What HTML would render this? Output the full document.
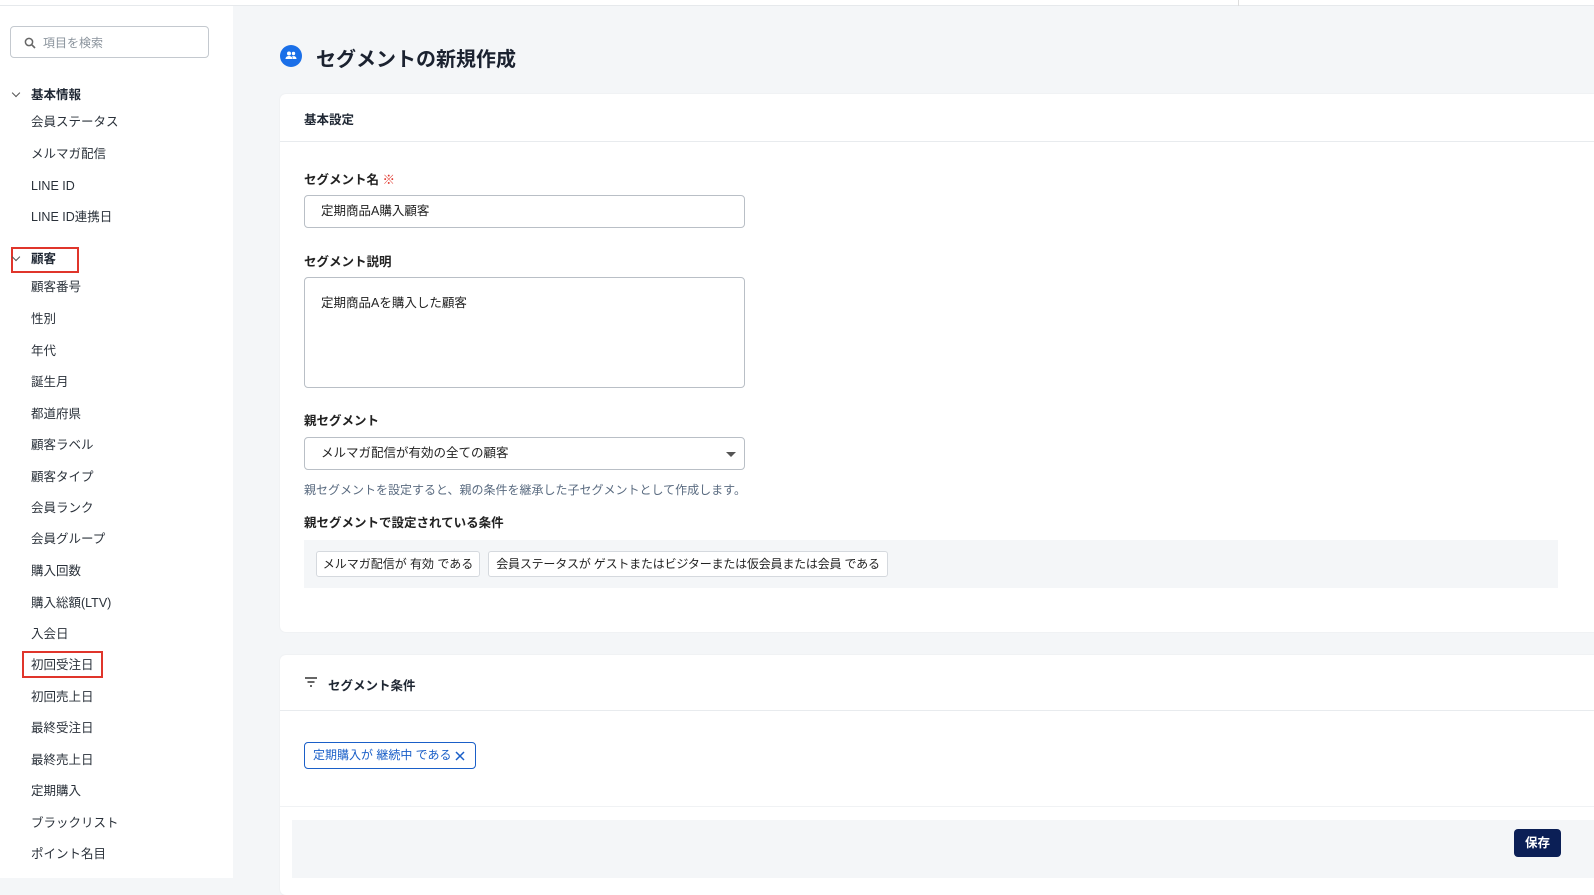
<!DOCTYPE html>
<html><head><meta charset="utf-8"><style>
*{box-sizing:border-box;margin:0;padding:0}
body{width:1594px;height:878px;overflow:hidden;background:#f4f6f8;font-family:"Liberation Sans","Noto Sans CJK JP",sans-serif;color:#1f2733;position:relative;white-space:nowrap}
.abs{position:absolute}
.top{left:0;top:0;width:1594px;height:6px;background:#fff;border-bottom:1px solid #e6e9ec}
.side{left:0;top:6px;width:233px;height:872px;background:#fff}
.search{left:10px;top:26px;width:199px;height:32px;border:1px solid #c4c9cf;border-radius:4px;font-size:12px;color:#8a939c;padding:7px 0 0 32px}
.it{left:31px;font-size:12.5px;color:#2a313a;line-height:16px}
.hd{left:31px;font-size:12.5px;font-weight:bold;line-height:16px}
.chev{left:13px;width:6px;height:6px;border-right:1px solid #555;border-bottom:1px solid #555;transform:rotate(45deg)}
.red{border:2px solid #e0352b}
.card{background:#fff;border-radius:6px;box-shadow:0 0 2px rgba(0,0,0,.06)}
.lbl{left:304px;font-size:12.5px;font-weight:bold;color:#222;line-height:16px}
.inp{left:304px;width:441px;border:1px solid #b9bfc6;border-radius:4px;background:#fff;font-size:12.5px;padding-left:16px;color:#222}
.chip{top:551px;height:26px;border:1px solid #d5d9de;border-radius:3px;background:#fff;font-size:12px;line-height:24px;text-align:center;color:#222;overflow:hidden}
</style></head><body>
<div class="abs top"></div>
<div class="abs" style="left:1238px;top:0;width:1px;height:6px;background:#ddd"></div>
<div class="abs side"></div>
<div class="abs search"><svg class="abs" style="left:13px;top:10px" width="12" height="12" viewBox="0 0 12 12"><circle cx="5" cy="5" r="3.6" fill="none" stroke="#666" stroke-width="1.5"/><path d="M7.6 7.6L11 11" stroke="#666" stroke-width="1.6"/></svg>項目を検索</div>

<div class="abs chev" style="top:90px"></div><div class="abs hd" style="top:87px">基本情報</div>
<div class="abs it" style="top:114px">会員ステータス</div>
<div class="abs it" style="top:146px">メルマガ配信</div>
<div class="abs it" style="top:178px">LINE ID</div>
<div class="abs it" style="top:209px">LINE ID連携日</div>
<div class="abs red" style="left:11px;top:247px;width:68px;height:26px"></div>
<div class="abs chev" style="top:254px"></div><div class="abs hd" style="top:251px">顧客</div>
<div class="abs it" style="top:279px">顧客番号</div>
<div class="abs it" style="top:311px">性別</div>
<div class="abs it" style="top:343px">年代</div>
<div class="abs it" style="top:374px">誕生月</div>
<div class="abs it" style="top:406px">都道府県</div>
<div class="abs it" style="top:437px">顧客ラベル</div>
<div class="abs it" style="top:469px">顧客タイプ</div>
<div class="abs it" style="top:500px">会員ランク</div>
<div class="abs it" style="top:531px">会員グループ</div>
<div class="abs it" style="top:563px">購入回数</div>
<div class="abs it" style="top:595px">購入総額(LTV)</div>
<div class="abs it" style="top:626px">入会日</div>
<div class="abs red" style="left:22px;top:651px;width:81px;height:27px"></div>
<div class="abs it" style="top:657px">初回受注日</div>
<div class="abs it" style="top:689px">初回売上日</div>
<div class="abs it" style="top:720px">最終受注日</div>
<div class="abs it" style="top:752px">最終売上日</div>
<div class="abs it" style="top:783px">定期購入</div>
<div class="abs it" style="top:815px">ブラックリスト</div>
<div class="abs it" style="top:846px">ポイント名目</div>

<div class="abs" style="left:280px;top:45px;width:22px;height:22px;border-radius:50%;background:#1a6fe8">
<svg width="22" height="22" viewBox="0 0 22 22"><circle cx="9" cy="8.5" r="2" fill="#fff"/><circle cx="13.5" cy="8.5" r="1.7" fill="#fff"/><path d="M5.5 14c0-2 1.6-3 3.5-3s3.5 1 3.5 3z M12.8 14c0-1.3-.3-2-.9-2.6 .5-.2 1-.3 1.6-.3 1.7 0 3 .9 3 2.9z" fill="#fff"/></svg></div>
<div class="abs" style="left:316px;top:43px;font-size:20px;font-weight:bold;color:#1b2230">セグメントの新規作成</div>

<div class="abs card" style="left:280px;top:94px;width:1330px;height:538px"></div>
<div class="abs" style="left:304px;top:109px;font-size:12.5px;font-weight:bold">基本設定</div>
<div class="abs" style="left:280px;top:141px;width:1314px;height:1px;background:#e8ebee"></div>
<div class="abs lbl" style="top:172px">セグメント名 <span style="color:#e0352b;font-weight:normal">※</span></div>
<div class="abs inp" style="top:195px;height:33px;line-height:31px">定期商品A購入顧客</div>
<div class="abs lbl" style="top:254px">セグメント説明</div>
<div class="abs inp" style="top:277px;height:111px;padding-top:17px;line-height:16px">定期商品Aを購入した顧客</div>
<div class="abs lbl" style="top:413px">親セグメント</div>
<div class="abs inp" style="top:437px;height:33px;line-height:31px">メルマガ配信が有効の全ての顧客<div class="abs" style="left:421px;top:14px;width:0;height:0;border-left:5px solid transparent;border-right:5px solid transparent;border-top:5px solid #555"></div></div>
<div class="abs" style="left:304px;top:481px;font-size:12px;color:#5a6b80">親セグメントを設定すると、親の条件を継承した子セグメントとして作成します。</div>
<div class="abs lbl" style="top:515px">親セグメントで設定されている条件</div>
<div class="abs" style="left:304px;top:540px;width:1254px;height:48px;background:#f4f6f8"></div>
<div class="abs chip" style="left:316px;width:164px">メルマガ配信が 有効 である</div>
<div class="abs chip" style="left:488px;width:400px;letter-spacing:-0.2px">会員ステータスが ゲストまたはビジターまたは仮会員または会員 である</div>

<div class="abs card" style="left:280px;top:655px;width:1330px;height:240px"></div>
<svg class="abs" style="left:304px;top:676px" width="14" height="12" viewBox="0 0 14 12"><path d="M1 2h12M3.5 6h7M6 10h2" stroke="#333" stroke-width="1.4"/></svg>
<div class="abs" style="left:328px;top:675px;font-size:12.5px;font-weight:bold">セグメント条件</div>
<div class="abs" style="left:280px;top:710px;width:1314px;height:1px;background:#e8ebee"></div>
<div class="abs" style="left:304px;top:742px;width:172px;height:27px;border:1px solid #1a5fc8;border-radius:4px;color:#1a5fc8;font-size:12px;line-height:25px;padding-left:8px">定期購入が 継続中 である<svg class="abs" style="left:150px;top:8px" width="10" height="10" viewBox="0 0 10 10"><path d="M1 1L9 9M9 1L1 9" stroke="#1a5fc8" stroke-width="1.5"/></svg></div>
<div class="abs" style="left:280px;top:806px;width:1314px;height:1px;background:#f0f2f4"></div>
<div class="abs" style="left:292px;top:820px;width:1302px;height:58px;background:#f4f6f8"></div>
<div class="abs" style="left:1514px;top:829px;width:47px;height:28px;background:#0b1f56;border-radius:4px;color:#fff;font-size:12.5px;font-weight:bold;text-align:center;line-height:28px">保存</div>
</body></html>
